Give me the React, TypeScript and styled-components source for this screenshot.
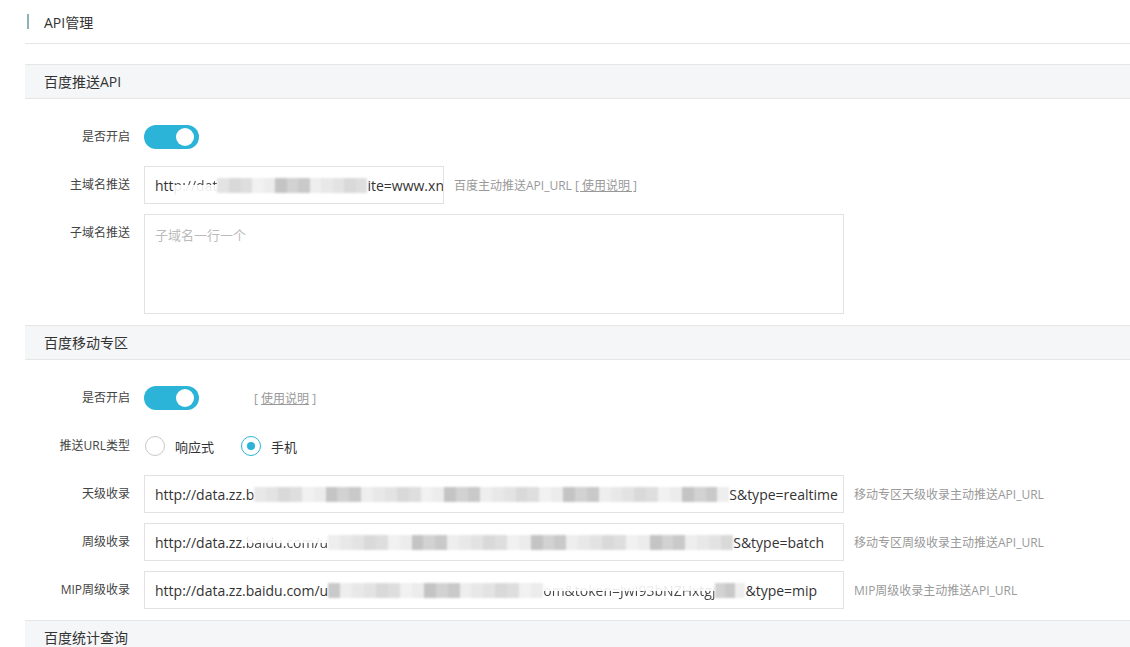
import styled, { createGlobalStyle } from "styled-components";

const GlobalStyle = createGlobalStyle`
  html, body {
    margin: 0;
    padding: 0;
    background: #fff;
  }
  body {
    font-family: "Open Sans", "Noto Sans CJK SC", sans-serif;
    color: #333;
    overflow: hidden;
  }
`;

const Page = styled.div`
  padding-left: 25px;
  width: 1140px;
`;

const TitleBar = styled.div`
  height: 43px;
  margin-bottom: 20px;
  display: flex;
  align-items: center;
  border-bottom: 1px solid #e6e6e6;
  font-size: 14px;
  color: #333;
`;

const Marker = styled.span`
  width: 2px;
  height: 15px;
  margin-left: 2px;
  margin-right: 15px;
  background: #8fb1ba;
`;

const SectionHeader = styled.div`
  height: 33px;
  line-height: 33px;
  padding-left: 19px;
  background: #f5f6f8;
  border-top: 1px solid #e6e6e6;
  border-bottom: 1px solid #e6e6e6;
  font-size: 14px;
  color: #333;
`;

const SectionBody = styled.div`
  padding: 19px 0 1px;
`;

const Row = styled.div<{ $top?: boolean }>`
  display: flex;
  align-items: ${({ $top }) => ($top ? "flex-start" : "center")};
  min-height: 38px;
  margin-bottom: 10px;
`;

const Label = styled.div`
  flex-shrink: 0;
  width: 105px;
  padding-right: 14px;
  box-sizing: content-box;
  text-align: right;
  line-height: 38px;
  font-size: 12px;
  color: #444;
`;

const UrlBox = styled.div<{ $wide?: boolean }>`
  box-sizing: border-box;
  width: ${({ $wide }) => ($wide ? 700 : 300)}px;
  height: 38px;
  padding: 0 10px;
  border: 1px solid #e2e2e2;
  display: flex;
  align-items: center;
  white-space: nowrap;
  overflow: hidden;
  font-size: 14px;
  color: #333;
`;

const TextArea = styled.textarea`
  display: block;
  box-sizing: border-box;
  width: 700px;
  height: 100px;
  margin: 0;
  padding: 10px;
  border: 1px solid #e2e2e2;
  resize: none;
  outline: none;
  font-family: "Open Sans", "Noto Sans CJK SC", sans-serif;
  font-size: 13px;
  color: #333;
  &::placeholder {
    color: #bbb;
  }
`;

const Help = styled.span<{ $gap?: number }>`
  margin-left: ${({ $gap }) => $gap ?? 10}px;
  font-size: 12px;
  color: #999;
  white-space: nowrap;
`;

const HelpLink = styled.a`
  color: #999;
  text-decoration: underline;
  cursor: pointer;
`;

const Toggle = styled.button<{ $on: boolean }>`
  position: relative;
  width: 55px;
  height: 24px;
  padding: 0;
  border: none;
  border-radius: 12px;
  background: ${({ $on }) => ($on ? "#2cb3d8" : "#ccc")};
  cursor: pointer;
  &::after {
    content: "";
    position: absolute;
    top: 3px;
    left: ${({ $on }) => ($on ? "32px" : "5px")};
    width: 18px;
    height: 18px;
    border-radius: 50%;
    background: #fff;
  }
`;

const RadioGroup = styled.div`
  display: flex;
  align-items: center;
  gap: 27px;
  padding-left: 1px;
`;

const RadioItem = styled.label`
  display: flex;
  align-items: center;
  gap: 10px;
  font-size: 13px;
  color: #333;
  cursor: pointer;
`;

const RadioDot = styled.span<{ $checked: boolean }>`
  box-sizing: border-box;
  width: 20px;
  height: 20px;
  border-radius: 50%;
  border: 1px solid ${({ $checked }) => ($checked ? "#2cb3d8" : "#c9c9c9")};
  display: flex;
  align-items: center;
  justify-content: center;
  &::after {
    content: "";
    width: 8px;
    height: 8px;
    border-radius: 50%;
    background: ${({ $checked }) => ($checked ? "#2cb3d8" : "transparent")};
  }
`;

// text whose top (or bottom) half is hidden under the privacy smear
const Cut = styled.span<{ $hide: "top" | "bottom" }>`
  background: ${({ $hide }) =>
    $hide === "top"
      ? "linear-gradient(to bottom, #eaeaea 52%, #444 52%)"
      : "linear-gradient(to bottom, #444 45%, #ececec 45%)"};
  -webkit-background-clip: text;
  background-clip: text;
  color: transparent;
`;

const Mosaic = styled.span<{ $width: number }>`
  flex-shrink: 0;
  display: inline-flex;
  width: ${({ $width }) => $width}px;
  height: 15px;
  filter: blur(0.8px);
`;

const Tile = styled.span`
  flex: 1;
  height: 100%;
`;

const shades = ["#d9d9d9", "#ececec", "#c9c9c9", "#e3e3e3", "#f1f1f1", "#d2d2d2", "#e8e8e8", "#dedede", "#c4c4c4", "#eeeeee"];

function Smear({ width, seed }: { width: number; seed: number }) {
  const count = Math.max(2, Math.round(width / 12));
  return (
    <Mosaic $width={width}>
      {Array.from({ length: count }, (_, i) => (
        <Tile key={i} style={{ background: shades[(i * 7 + seed * 3) % shades.length] }} />
      ))}
    </Mosaic>
  );
}

function Switch({ on = true }: { on?: boolean }) {
  return <Toggle $on={on} aria-pressed={on} />;
}

export default function App() {
  return (
    <>
      <GlobalStyle />
      <Page>
        <TitleBar>
          <Marker />
          API管理
        </TitleBar>

        <SectionHeader>百度推送API</SectionHeader>
        <SectionBody>
          <Row>
            <Label>是否开启</Label>
            <Switch />
          </Row>
          <Row>
            <Label>主域名推送</Label>
            <UrlBox>
              htt<Cut $hide="bottom">p://dat</Cut>
              <Smear width={150} seed={1} />
              ite=www.xn
            </UrlBox>
            <Help>
              百度主动推送API_URL <HelpLink>[ 使用说明 ]</HelpLink>
            </Help>
          </Row>
          <Row $top>
            <Label>子域名推送</Label>
            <TextArea placeholder="子域名一行一个" />
          </Row>
        </SectionBody>

        <SectionHeader>百度移动专区</SectionHeader>
        <SectionBody>
          <Row>
            <Label>是否开启</Label>
            <Switch />
            <Help $gap={55}>
              [ <HelpLink>使用说明</HelpLink> ]
            </Help>
          </Row>
          <Row>
            <Label>推送URL类型</Label>
            <RadioGroup>
              <RadioItem>
                <RadioDot $checked={false} />
                响应式
              </RadioItem>
              <RadioItem>
                <RadioDot $checked />
                手机
              </RadioItem>
            </RadioGroup>
          </Row>
          <Row>
            <Label>天级收录</Label>
            <UrlBox $wide>
              http://data.zz.b
              <Smear width={475} seed={2} />
              S&amp;type=realtime
            </UrlBox>
            <Help>移动专区天级收录主动推送API_URL</Help>
          </Row>
          <Row>
            <Label>周级收录</Label>
            <UrlBox $wide>
              http://data.zz.<Cut $hide="top">baidu.com/u</Cut>
              <Smear width={405} seed={3} />
              S&amp;type=batch
            </UrlBox>
            <Help>移动专区周级收录主动推送API_URL</Help>
          </Row>
          <Row>
            <Label>MIP周级收录</Label>
            <UrlBox $wide>
              http://data.zz.baidu.com/u
              <Smear width={215} seed={4} />
              <Cut $hide="top">om&amp;token=JwI93bNZHxtgj</Cut>
              <Smear width={30} seed={5} />
              &amp;type=mip
            </UrlBox>
            <Help>MIP周级收录主动推送API_URL</Help>
          </Row>
        </SectionBody>

        <SectionHeader>百度统计查询</SectionHeader>
      </Page>
    </>
  );
}
